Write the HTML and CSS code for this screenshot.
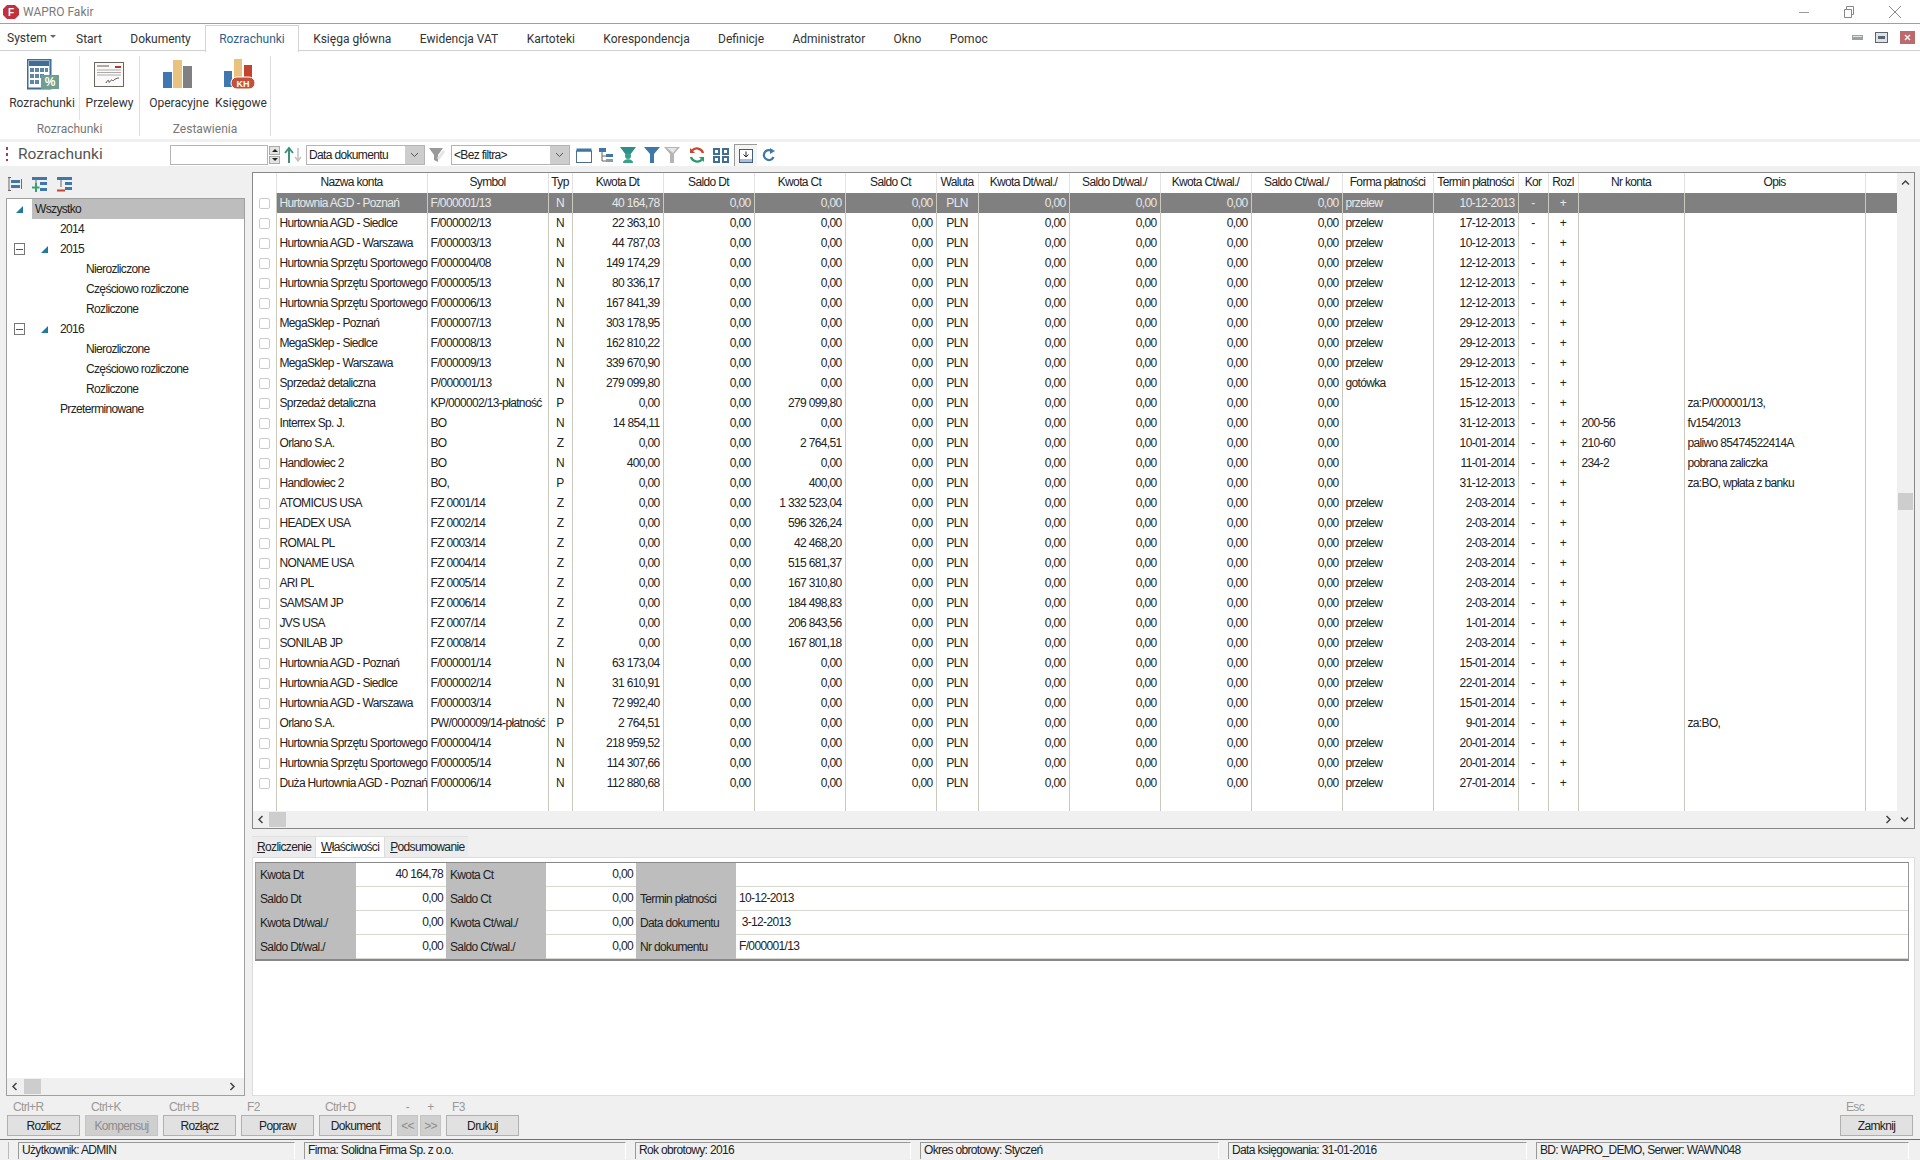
FILE: index.html
```html
<!DOCTYPE html>
<html lang="pl">
<head>
<meta charset="utf-8">
<title>WAPRO Fakir</title>
<link rel="stylesheet" href="styles.css">
</head>
<body>
<div class="app">
  <header class="titlebar">
    <svg class="logo" width="16" height="14" viewBox="0 0 16 14"><polygon points="4,0 12,0 16,4 16,10 12,14 4,14 0,10 0,4" fill="#c4303a"/><text x="8" y="11" text-anchor="middle" class="logo-f">F</text></svg>
    <span class="app-name">WAPRO Fakir</span>
    <div class="winbtns">
      <svg width="12" height="12" viewBox="0 0 12 12"><path d="M1 6.5h10" stroke="#999" fill="none"/></svg>
      <svg width="12" height="12" viewBox="0 0 12 12"><path d="M1.5 3.5h7v8h-7zM3.5 3.5v-3h7v8h-2" stroke="#888" fill="none"/></svg>
      <svg width="14" height="14" viewBox="0 0 14 14"><path d="M1 1l12 12M13 1L1 13" stroke="#888" fill="none"/></svg>
    </div>
  </header>

  <nav class="menubar">
    <span class="tab first">System<i class="caret"></i></span>
    <span class="tab t-start">Start</span>
    <span class="tab">Dokumenty</span>
    <span class="tab active">Rozrachunki</span>
    <span class="tab">Księga główna</span>
    <span class="tab">Ewidencja VAT</span>
    <span class="tab">Kartoteki</span>
    <span class="tab">Korespondencja</span>
    <span class="tab">Definicje</span>
    <span class="tab">Administrator</span>
    <span class="tab">Okno</span>
    <span class="tab">Pomoc</span>
    <div class="mdibtns">
      <svg width="11" height="5" viewBox="0 0 11 5"><rect x="0" y="0" width="11" height="5" fill="#9aa0a8"/><rect x="1" y="1" width="9" height="1" fill="#e4e4e4"/></svg>
      <svg width="13" height="11" viewBox="0 0 13 11"><rect x=".5" y=".5" width="12" height="10" fill="#dfe2e6" stroke="#5c6670"/><rect x="3" y="4" width="7" height="3" fill="#5c6670"/></svg>
      <svg width="15" height="13" viewBox="0 0 15 13"><rect width="15" height="13" fill="#bd6a6c"/><path d="M5 4l5 5M10 4l-5 5" stroke="#eee" stroke-width="1.6"/></svg>
    </div>
  </nav>

  <section class="ribbon">
    <div class="rgroup g1">
      <div class="rbtns">
        <div class="rbtn b-roz">
          <svg width="32" height="31" viewBox="0 0 32 31"><rect x=".5" y=".5" width="23" height="29" fill="#fff" stroke="#3f6d94" stroke-width="2"/><rect x="2" y="2" width="20" height="5" fill="#3f6d94"/><g fill="#5d86a8"><rect x="3" y="9" width="4" height="4"/><rect x="8" y="9" width="4" height="4"/><rect x="13" y="9" width="4" height="4"/><rect x="18" y="9" width="3" height="4"/><rect x="3" y="15" width="4" height="4"/><rect x="8" y="15" width="4" height="4"/><rect x="13" y="15" width="4" height="4"/><rect x="3" y="21" width="4" height="4"/><rect x="8" y="21" width="4" height="4"/></g><rect x="14" y="16" width="18" height="14" fill="#6f9f90"/><text x="23" y="27" text-anchor="middle" class="pct">%</text></svg>
          <span>Rozrachunki</span>
        </div>
        <div class="rbtn b-prz">
          <svg width="30" height="25" viewBox="0 0 30 25"><rect x=".5" y=".5" width="29" height="24" fill="#fbfaf8" stroke="#6b6560"/><rect x="3" y="3" width="12" height="2" fill="#b0aaa5"/><rect x="21" y="4" width="6" height="2" fill="#b13a30"/><path d="M3 8h24M3 10.5h24M3 13h24" stroke="#aaa" fill="none"/><path d="M12 21c2-4 3-3 3-1s2-3 3-2 1 1 2 0 3-2 5-2" stroke="#555" fill="none"/></svg>
          <span>Przelewy</span>
        </div>
      </div>
      <div class="rlabel">Rozrachunki</div>
    </div>
    <div class="rgroup g2">
      <div class="rbtns">
        <div class="rbtn b-ope">
          <svg width="29" height="28" viewBox="0 0 29 28"><rect x="0" y="12" width="9" height="16" fill="#3f78b0"/><rect x="10" y="0" width="9" height="28" fill="#e8c27e"/><rect x="20" y="6" width="9" height="22" fill="#808080"/></svg>
          <span>Operacyjne</span>
        </div>
        <div class="rbtn b-ksi">
          <svg width="31" height="31" viewBox="0 0 31 31"><rect x="0" y="12" width="8" height="16" fill="#3f78b0"/><rect x="10" y="0" width="8" height="28" fill="#e8c27e"/><rect x="20" y="6" width="8" height="22" fill="#c4432f"/><rect x="7" y="18" width="24" height="12" rx="6" fill="#c4503c" stroke="#fff"/><text x="19" y="28" text-anchor="middle" class="kh">KH</text></svg>
          <span>Księgowe</span>
        </div>
      </div>
      <div class="rlabel">Zestawienia</div>
    </div>
  </section>

  <section class="toolbar">
    <div class="tb-title"><i class="dots"></i><span>Rozrachunki</span></div>
    <input class="searchbox" type="text" value="" aria-label="Szukaj">
    <div class="spinner"><b class="up"></b><b class="down"></b></div>
    <svg class="sort" width="19" height="18" viewBox="0 0 19 18"><path d="M5 17V3M1 7l4-5 4 5" stroke="#3f8f7f" stroke-width="2" fill="none"/><path d="M14 2v13M11 11l3 4 3-4" stroke="#c4c4c4" stroke-width="1.6" fill="none"/></svg>
    <div class="combo c1"><span>Data dokumentu</span><i class="drop"><svg width="9" height="6" viewBox="0 0 9 6"><path d="M1 1l3.5 3.5L8 1" stroke="#555" fill="none"/></svg></i></div>
    <svg class="funnel-x" width="18" height="18" viewBox="0 0 18 18"><path d="M1 2h14l-5 7v7l-4-2V9z" fill="#9a9a9a"/><path d="M9 12l6-8 2 2-6 8z" fill="#e4e4e4"/></svg>
    <div class="combo c2"><span>&lt;Bez filtra&gt;</span><i class="drop"><svg width="9" height="6" viewBox="0 0 9 6"><path d="M1 1l3.5 3.5L8 1" stroke="#555" fill="none"/></svg></i></div>
    <div class="tb-icons">
      <svg class="i1" width="16" height="15" viewBox="0 0 16 15"><rect x=".5" y="3" width="15" height="11.5" fill="#fff" stroke="#4a6f8f"/><rect x=".5" y=".5" width="15" height="3" fill="#3f78a8"/></svg>
      <svg class="i2" width="16" height="15" viewBox="0 0 16 15"><rect x="1" y="0" width="7" height="4" fill="#3f78a8"/><path d="M4 4v9h4M4 8h4" stroke="#666" fill="none"/><rect x="8" y="6" width="7" height="3" fill="#3f78a8"/><rect x="8" y="11" width="7" height="3" fill="#8a9aa8"/></svg>
      <svg class="i3" width="16" height="16" viewBox="0 0 16 16"><path d="M0 0h16l-6 8v0H6z" fill="#2f8f88"/><circle cx="8" cy="9" r="3" fill="#38a088"/><path d="M3 16c0-5 10-5 10 0z" fill="#38a088"/></svg>
      <svg class="i4" width="16" height="16" viewBox="0 0 16 16"><path d="M0 0h16l-6 7v9H6V7z" fill="#3f78a8"/></svg>
      <svg class="i5" width="16" height="16" viewBox="0 0 16 16"><path d="M0 0h16l-6 7v9H6V7z" fill="#b5b5b5"/><path d="M3 1h10l-4 5z" fill="#e6e6e6"/></svg>
      <svg class="i6" width="16" height="16" viewBox="0 0 16 16"><path d="M14 6A6.500 6.500 0 0 0 3 3.500" stroke="#c8452f" stroke-width="2.400" fill="none"/><path d="M1 1v5h5z" fill="#c8452f"/><path d="M2 10a6.500 6.500 0 0 0 11 2.500" stroke="#2f9a70" stroke-width="2.400" fill="none"/><path d="M15 15v-5h-5z" fill="#2f9a70"/></svg>
      <svg class="i7" width="16" height="15" viewBox="0 0 16 15"><g fill="none" stroke="#3f6d94" stroke-width="2"><rect x="1" y="1" width="5" height="5"/><rect x="10" y="1" width="5" height="5"/><rect x="1" y="9" width="5" height="5"/><rect x="10" y="9" width="5" height="5"/></g></svg>
      <div class="i8"><svg width="14" height="14" viewBox="0 0 14 14"><rect x=".5" y=".5" width="13" height="13" fill="#fff" stroke="#3f5f7f"/><rect x="1" y="10" width="12" height="3" fill="#a8c0d8"/><path d="M7 2.500v5M4.500 5.500L7 8l2.500-2.500" stroke="#222" fill="none"/></svg></div>
      <svg class="i9" width="14" height="14" viewBox="0 0 14 14"><path d="M11.500 9A5 5 0 1 1 9 2.500" stroke="#3f78a8" stroke-width="2.200" fill="none"/><path d="M8 0l5 3-5 3z" fill="#3f78a8"/></svg>
    </div>
  </section>

  <main class="content">
    <aside class="left">
      <div class="treetools">
        <svg width="15" height="14" viewBox="0 0 15 14"><path d="M1 0v14M0 .5h3M0 13.500h3" stroke="#666" fill="none"/><rect x="3" y="3" width="9" height="3" fill="#3f78a8"/><rect x="3" y="8" width="9" height="3" fill="#3f78a8"/><path d="M13.500 2v10" stroke="#3f78a8"/></svg>
        <svg width="16" height="15" viewBox="0 0 16 15"><rect x="0" y="0" width="15" height="3" fill="#3f78a8"/><rect x="8" y="5" width="7" height="3" fill="#3f78a8"/><rect x="8" y="11" width="7" height="3" fill="#3f78a8"/><path d="M4 3v3" stroke="#666"/><path d="M4 6v9M0 10.500h7.500" stroke="#37a26f" stroke-width="2"/></svg>
        <svg width="16" height="15" viewBox="0 0 16 15"><rect x="0" y="0" width="15" height="3" fill="#3f78a8"/><rect x="8" y="5" width="7" height="3" fill="#3f78a8"/><rect x="8" y="10" width="7" height="3" fill="#3f78a8"/><path d="M4 3v7" stroke="#666"/><path d="M0 13.500h8" stroke="#c8452f" stroke-width="2"/></svg>
      </div>
      <div class="tree">
        <div class="tree-rows">
          <div class="node l0 sel"><svg class="tri" width="7" height="7" viewBox="0 0 7 7"><path d="M7 0v7H0z"/></svg><span>Wszystko</span></div>
          <div class="node l1"><span>2014</span></div>
          <div class="node l1"><i class="toggle"></i><svg class="tri" width="7" height="7" viewBox="0 0 7 7"><path d="M7 0v7H0z"/></svg><span>2015</span></div>
          <div class="node l2"><span>Nierozliczone</span></div>
          <div class="node l2"><span>Częściowo rozliczone</span></div>
          <div class="node l2"><span>Rozliczone</span></div>
          <div class="node l1"><i class="toggle"></i><svg class="tri" width="7" height="7" viewBox="0 0 7 7"><path d="M7 0v7H0z"/></svg><span>2016</span></div>
          <div class="node l2"><span>Nierozliczone</span></div>
          <div class="node l2"><span>Częściowo rozliczone</span></div>
          <div class="node l2"><span>Rozliczone</span></div>
          <div class="node l1"><span>Przeterminowane</span></div>
        </div>
        <div class="hscroll tree-scroll">
          <svg class="arrow" width="7" height="9" viewBox="0 0 7 9"><path d="M5.500 1L2 4.500 5.500 8" stroke="#444" stroke-width="1.500" fill="none"/></svg>
          <i class="thumb tree-thumb"></i>
          <svg class="arrow end" width="7" height="9" viewBox="0 0 7 9"><path d="M1.500 1L5 4.500 1.500 8" stroke="#444" stroke-width="1.500" fill="none"/></svg>
        </div>
      </div>
    </aside>

    <div class="right">
      <div class="grid">
        <div class="grid-main">
          <table class="data">
            <colgroup><col class="w-chk"><col class="w-name"><col class="w-sym"><col class="w-typ"><col class="w-a"><col class="w-a"><col class="w-a"><col class="w-a"><col class="w-wal"><col class="w-a"><col class="w-a"><col class="w-a"><col class="w-a"><col class="w-a"><col class="w-term"><col class="w-kor"><col class="w-kor"><col class="w-nr"><col class="w-opis"><col class="w-end"></colgroup>
            <thead><tr><th></th><th>Nazwa konta</th><th>Symbol</th><th>Typ</th><th>Kwota Dt</th><th>Saldo Dt</th><th>Kwota Ct</th><th>Saldo Ct</th><th>Waluta</th><th>Kwota Dt/wal./</th><th>Saldo Dt/wal./</th><th>Kwota Ct/wal./</th><th>Saldo Ct/wal./</th><th>Forma płatności</th><th>Termin płatności</th><th>Kor</th><th>Rozl</th><th>Nr konta</th><th>Opis</th><th></th></tr></thead>
            <tbody>
<tr class="selected"><td class="chk"><i></i></td><td>Hurtownia AGD - Poznań</td><td>F/000001/13</td><td class="ctr">N</td><td class="n">40 164,78</td><td class="n">0,00</td><td class="n">0,00</td><td class="n">0,00</td><td class="ctr">PLN</td><td class="n">0,00</td><td class="n">0,00</td><td class="n">0,00</td><td class="n">0,00</td><td>przelew</td><td class="n">10-12-2013</td><td class="ctr">-</td><td class="ctr">+</td><td></td><td></td><td></td></tr>
<tr><td class="chk"><i></i></td><td>Hurtownia AGD - Siedlce</td><td>F/000002/13</td><td class="ctr">N</td><td class="n">22 363,10</td><td class="n">0,00</td><td class="n">0,00</td><td class="n">0,00</td><td class="ctr">PLN</td><td class="n">0,00</td><td class="n">0,00</td><td class="n">0,00</td><td class="n">0,00</td><td>przelew</td><td class="n">17-12-2013</td><td class="ctr">-</td><td class="ctr">+</td><td></td><td></td><td></td></tr>
<tr><td class="chk"><i></i></td><td>Hurtownia AGD - Warszawa</td><td>F/000003/13</td><td class="ctr">N</td><td class="n">44 787,03</td><td class="n">0,00</td><td class="n">0,00</td><td class="n">0,00</td><td class="ctr">PLN</td><td class="n">0,00</td><td class="n">0,00</td><td class="n">0,00</td><td class="n">0,00</td><td>przelew</td><td class="n">10-12-2013</td><td class="ctr">-</td><td class="ctr">+</td><td></td><td></td><td></td></tr>
<tr><td class="chk"><i></i></td><td>Hurtownia Sprzętu Sportowego</td><td>F/000004/08</td><td class="ctr">N</td><td class="n">149 174,29</td><td class="n">0,00</td><td class="n">0,00</td><td class="n">0,00</td><td class="ctr">PLN</td><td class="n">0,00</td><td class="n">0,00</td><td class="n">0,00</td><td class="n">0,00</td><td>przelew</td><td class="n">12-12-2013</td><td class="ctr">-</td><td class="ctr">+</td><td></td><td></td><td></td></tr>
<tr><td class="chk"><i></i></td><td>Hurtownia Sprzętu Sportowego</td><td>F/000005/13</td><td class="ctr">N</td><td class="n">80 336,17</td><td class="n">0,00</td><td class="n">0,00</td><td class="n">0,00</td><td class="ctr">PLN</td><td class="n">0,00</td><td class="n">0,00</td><td class="n">0,00</td><td class="n">0,00</td><td>przelew</td><td class="n">12-12-2013</td><td class="ctr">-</td><td class="ctr">+</td><td></td><td></td><td></td></tr>
<tr><td class="chk"><i></i></td><td>Hurtownia Sprzętu Sportowego</td><td>F/000006/13</td><td class="ctr">N</td><td class="n">167 841,39</td><td class="n">0,00</td><td class="n">0,00</td><td class="n">0,00</td><td class="ctr">PLN</td><td class="n">0,00</td><td class="n">0,00</td><td class="n">0,00</td><td class="n">0,00</td><td>przelew</td><td class="n">12-12-2013</td><td class="ctr">-</td><td class="ctr">+</td><td></td><td></td><td></td></tr>
<tr><td class="chk"><i></i></td><td>MegaSklep - Poznań</td><td>F/000007/13</td><td class="ctr">N</td><td class="n">303 178,95</td><td class="n">0,00</td><td class="n">0,00</td><td class="n">0,00</td><td class="ctr">PLN</td><td class="n">0,00</td><td class="n">0,00</td><td class="n">0,00</td><td class="n">0,00</td><td>przelew</td><td class="n">29-12-2013</td><td class="ctr">-</td><td class="ctr">+</td><td></td><td></td><td></td></tr>
<tr><td class="chk"><i></i></td><td>MegaSklep - Siedlce</td><td>F/000008/13</td><td class="ctr">N</td><td class="n">162 810,22</td><td class="n">0,00</td><td class="n">0,00</td><td class="n">0,00</td><td class="ctr">PLN</td><td class="n">0,00</td><td class="n">0,00</td><td class="n">0,00</td><td class="n">0,00</td><td>przelew</td><td class="n">29-12-2013</td><td class="ctr">-</td><td class="ctr">+</td><td></td><td></td><td></td></tr>
<tr><td class="chk"><i></i></td><td>MegaSklep - Warszawa</td><td>F/000009/13</td><td class="ctr">N</td><td class="n">339 670,90</td><td class="n">0,00</td><td class="n">0,00</td><td class="n">0,00</td><td class="ctr">PLN</td><td class="n">0,00</td><td class="n">0,00</td><td class="n">0,00</td><td class="n">0,00</td><td>przelew</td><td class="n">29-12-2013</td><td class="ctr">-</td><td class="ctr">+</td><td></td><td></td><td></td></tr>
<tr><td class="chk"><i></i></td><td>Sprzedaż detaliczna</td><td>P/000001/13</td><td class="ctr">N</td><td class="n">279 099,80</td><td class="n">0,00</td><td class="n">0,00</td><td class="n">0,00</td><td class="ctr">PLN</td><td class="n">0,00</td><td class="n">0,00</td><td class="n">0,00</td><td class="n">0,00</td><td>gotówka</td><td class="n">15-12-2013</td><td class="ctr">-</td><td class="ctr">+</td><td></td><td></td><td></td></tr>
<tr><td class="chk"><i></i></td><td>Sprzedaż detaliczna</td><td>KP/000002/13-płatność</td><td class="ctr">P</td><td class="n">0,00</td><td class="n">0,00</td><td class="n">279 099,80</td><td class="n">0,00</td><td class="ctr">PLN</td><td class="n">0,00</td><td class="n">0,00</td><td class="n">0,00</td><td class="n">0,00</td><td></td><td class="n">15-12-2013</td><td class="ctr">-</td><td class="ctr">+</td><td></td><td>za:P/000001/13,</td><td></td></tr>
<tr><td class="chk"><i></i></td><td>Interrex Sp. J.</td><td>BO</td><td class="ctr">N</td><td class="n">14 854,11</td><td class="n">0,00</td><td class="n">0,00</td><td class="n">0,00</td><td class="ctr">PLN</td><td class="n">0,00</td><td class="n">0,00</td><td class="n">0,00</td><td class="n">0,00</td><td></td><td class="n">31-12-2013</td><td class="ctr">-</td><td class="ctr">+</td><td>200-56</td><td>fv154/2013</td><td></td></tr>
<tr><td class="chk"><i></i></td><td>Orlano S.A.</td><td>BO</td><td class="ctr">Z</td><td class="n">0,00</td><td class="n">0,00</td><td class="n">2 764,51</td><td class="n">0,00</td><td class="ctr">PLN</td><td class="n">0,00</td><td class="n">0,00</td><td class="n">0,00</td><td class="n">0,00</td><td></td><td class="n">10-01-2014</td><td class="ctr">-</td><td class="ctr">+</td><td>210-60</td><td>paliwo 85474522414A</td><td></td></tr>
<tr><td class="chk"><i></i></td><td>Handlowiec 2</td><td>BO</td><td class="ctr">N</td><td class="n">400,00</td><td class="n">0,00</td><td class="n">0,00</td><td class="n">0,00</td><td class="ctr">PLN</td><td class="n">0,00</td><td class="n">0,00</td><td class="n">0,00</td><td class="n">0,00</td><td></td><td class="n">11-01-2014</td><td class="ctr">-</td><td class="ctr">+</td><td>234-2</td><td>pobrana zaliczka</td><td></td></tr>
<tr><td class="chk"><i></i></td><td>Handlowiec 2</td><td>BO,</td><td class="ctr">P</td><td class="n">0,00</td><td class="n">0,00</td><td class="n">400,00</td><td class="n">0,00</td><td class="ctr">PLN</td><td class="n">0,00</td><td class="n">0,00</td><td class="n">0,00</td><td class="n">0,00</td><td></td><td class="n">31-12-2013</td><td class="ctr">-</td><td class="ctr">+</td><td></td><td>za:BO, wpłata z banku</td><td></td></tr>
<tr><td class="chk"><i></i></td><td>ATOMICUS USA</td><td>FZ 0001/14</td><td class="ctr">Z</td><td class="n">0,00</td><td class="n">0,00</td><td class="n">1 332 523,04</td><td class="n">0,00</td><td class="ctr">PLN</td><td class="n">0,00</td><td class="n">0,00</td><td class="n">0,00</td><td class="n">0,00</td><td>przelew</td><td class="n">2-03-2014</td><td class="ctr">-</td><td class="ctr">+</td><td></td><td></td><td></td></tr>
<tr><td class="chk"><i></i></td><td>HEADEX USA</td><td>FZ 0002/14</td><td class="ctr">Z</td><td class="n">0,00</td><td class="n">0,00</td><td class="n">596 326,24</td><td class="n">0,00</td><td class="ctr">PLN</td><td class="n">0,00</td><td class="n">0,00</td><td class="n">0,00</td><td class="n">0,00</td><td>przelew</td><td class="n">2-03-2014</td><td class="ctr">-</td><td class="ctr">+</td><td></td><td></td><td></td></tr>
<tr><td class="chk"><i></i></td><td>ROMAL PL</td><td>FZ 0003/14</td><td class="ctr">Z</td><td class="n">0,00</td><td class="n">0,00</td><td class="n">42 468,20</td><td class="n">0,00</td><td class="ctr">PLN</td><td class="n">0,00</td><td class="n">0,00</td><td class="n">0,00</td><td class="n">0,00</td><td>przelew</td><td class="n">2-03-2014</td><td class="ctr">-</td><td class="ctr">+</td><td></td><td></td><td></td></tr>
<tr><td class="chk"><i></i></td><td>NONAME USA</td><td>FZ 0004/14</td><td class="ctr">Z</td><td class="n">0,00</td><td class="n">0,00</td><td class="n">515 681,37</td><td class="n">0,00</td><td class="ctr">PLN</td><td class="n">0,00</td><td class="n">0,00</td><td class="n">0,00</td><td class="n">0,00</td><td>przelew</td><td class="n">2-03-2014</td><td class="ctr">-</td><td class="ctr">+</td><td></td><td></td><td></td></tr>
<tr><td class="chk"><i></i></td><td>ARI PL</td><td>FZ 0005/14</td><td class="ctr">Z</td><td class="n">0,00</td><td class="n">0,00</td><td class="n">167 310,80</td><td class="n">0,00</td><td class="ctr">PLN</td><td class="n">0,00</td><td class="n">0,00</td><td class="n">0,00</td><td class="n">0,00</td><td>przelew</td><td class="n">2-03-2014</td><td class="ctr">-</td><td class="ctr">+</td><td></td><td></td><td></td></tr>
<tr><td class="chk"><i></i></td><td>SAMSAM JP</td><td>FZ 0006/14</td><td class="ctr">Z</td><td class="n">0,00</td><td class="n">0,00</td><td class="n">184 498,83</td><td class="n">0,00</td><td class="ctr">PLN</td><td class="n">0,00</td><td class="n">0,00</td><td class="n">0,00</td><td class="n">0,00</td><td>przelew</td><td class="n">2-03-2014</td><td class="ctr">-</td><td class="ctr">+</td><td></td><td></td><td></td></tr>
<tr><td class="chk"><i></i></td><td>JVS USA</td><td>FZ 0007/14</td><td class="ctr">Z</td><td class="n">0,00</td><td class="n">0,00</td><td class="n">206 843,56</td><td class="n">0,00</td><td class="ctr">PLN</td><td class="n">0,00</td><td class="n">0,00</td><td class="n">0,00</td><td class="n">0,00</td><td>przelew</td><td class="n">1-01-2014</td><td class="ctr">-</td><td class="ctr">+</td><td></td><td></td><td></td></tr>
<tr><td class="chk"><i></i></td><td>SONILAB JP</td><td>FZ 0008/14</td><td class="ctr">Z</td><td class="n">0,00</td><td class="n">0,00</td><td class="n">167 801,18</td><td class="n">0,00</td><td class="ctr">PLN</td><td class="n">0,00</td><td class="n">0,00</td><td class="n">0,00</td><td class="n">0,00</td><td>przelew</td><td class="n">2-03-2014</td><td class="ctr">-</td><td class="ctr">+</td><td></td><td></td><td></td></tr>
<tr><td class="chk"><i></i></td><td>Hurtownia AGD - Poznań</td><td>F/000001/14</td><td class="ctr">N</td><td class="n">63 173,04</td><td class="n">0,00</td><td class="n">0,00</td><td class="n">0,00</td><td class="ctr">PLN</td><td class="n">0,00</td><td class="n">0,00</td><td class="n">0,00</td><td class="n">0,00</td><td>przelew</td><td class="n">15-01-2014</td><td class="ctr">-</td><td class="ctr">+</td><td></td><td></td><td></td></tr>
<tr><td class="chk"><i></i></td><td>Hurtownia AGD - Siedlce</td><td>F/000002/14</td><td class="ctr">N</td><td class="n">31 610,91</td><td class="n">0,00</td><td class="n">0,00</td><td class="n">0,00</td><td class="ctr">PLN</td><td class="n">0,00</td><td class="n">0,00</td><td class="n">0,00</td><td class="n">0,00</td><td>przelew</td><td class="n">22-01-2014</td><td class="ctr">-</td><td class="ctr">+</td><td></td><td></td><td></td></tr>
<tr><td class="chk"><i></i></td><td>Hurtownia AGD - Warszawa</td><td>F/000003/14</td><td class="ctr">N</td><td class="n">72 992,40</td><td class="n">0,00</td><td class="n">0,00</td><td class="n">0,00</td><td class="ctr">PLN</td><td class="n">0,00</td><td class="n">0,00</td><td class="n">0,00</td><td class="n">0,00</td><td>przelew</td><td class="n">15-01-2014</td><td class="ctr">-</td><td class="ctr">+</td><td></td><td></td><td></td></tr>
<tr><td class="chk"><i></i></td><td>Orlano S.A.</td><td>PW/000009/14-płatność</td><td class="ctr">P</td><td class="n">2 764,51</td><td class="n">0,00</td><td class="n">0,00</td><td class="n">0,00</td><td class="ctr">PLN</td><td class="n">0,00</td><td class="n">0,00</td><td class="n">0,00</td><td class="n">0,00</td><td></td><td class="n">9-01-2014</td><td class="ctr">-</td><td class="ctr">+</td><td></td><td>za:BO,</td><td></td></tr>
<tr><td class="chk"><i></i></td><td>Hurtownia Sprzętu Sportowego</td><td>F/000004/14</td><td class="ctr">N</td><td class="n">218 959,52</td><td class="n">0,00</td><td class="n">0,00</td><td class="n">0,00</td><td class="ctr">PLN</td><td class="n">0,00</td><td class="n">0,00</td><td class="n">0,00</td><td class="n">0,00</td><td>przelew</td><td class="n">20-01-2014</td><td class="ctr">-</td><td class="ctr">+</td><td></td><td></td><td></td></tr>
<tr><td class="chk"><i></i></td><td>Hurtownia Sprzętu Sportowego</td><td>F/000005/14</td><td class="ctr">N</td><td class="n">114 307,66</td><td class="n">0,00</td><td class="n">0,00</td><td class="n">0,00</td><td class="ctr">PLN</td><td class="n">0,00</td><td class="n">0,00</td><td class="n">0,00</td><td class="n">0,00</td><td>przelew</td><td class="n">20-01-2014</td><td class="ctr">-</td><td class="ctr">+</td><td></td><td></td><td></td></tr>
<tr><td class="chk"><i></i></td><td>Duża Hurtownia AGD - Poznań</td><td>F/000006/14</td><td class="ctr">N</td><td class="n">112 880,68</td><td class="n">0,00</td><td class="n">0,00</td><td class="n">0,00</td><td class="ctr">PLN</td><td class="n">0,00</td><td class="n">0,00</td><td class="n">0,00</td><td class="n">0,00</td><td>przelew</td><td class="n">27-01-2014</td><td class="ctr">-</td><td class="ctr">+</td><td></td><td></td><td></td></tr>
<tr class="filler"><td class="chk"></td><td></td><td></td><td></td><td></td><td></td><td></td><td></td><td></td><td></td><td></td><td></td><td></td><td></td><td></td><td></td><td></td><td></td><td></td><td></td></tr>
            </tbody>
          </table>
          <div class="vscroll">
            <svg width="9" height="7" viewBox="0 0 9 7"><path d="M1 5.500L4.500 2 8 5.500" stroke="#444" stroke-width="1.500" fill="none"/></svg>
            <i class="vthumb"></i>
          </div>
        </div>
        <div class="hscroll grid-scroll">
          <svg class="arrow" width="7" height="9" viewBox="0 0 7 9"><path d="M5.500 1L2 4.500 5.500 8" stroke="#444" stroke-width="1.500" fill="none"/></svg>
          <i class="thumb grid-thumb"></i>
          <svg class="arrow end" width="7" height="9" viewBox="0 0 7 9"><path d="M1.500 1L5 4.500 1.500 8" stroke="#444" stroke-width="1.500" fill="none"/></svg>
          <svg class="arrow corner" width="9" height="7" viewBox="0 0 9 7"><path d="M1 1.500L4.500 5 8 1.500" stroke="#444" stroke-width="1.500" fill="none"/></svg>
        </div>
      </div>

      <div class="subtabs">
        <span class="subtab"><u>R</u>ozliczenie</span>
        <span class="subtab on"><u>W</u>łaściwości</span>
        <span class="subtab"><u>P</u>odsumowanie</span>
      </div>
      <div class="props-panel">
        <div class="props">
          <span class="lbl">Kwota Dt</span><span class="val num">40 164,78</span><span class="lbl">Kwota Ct</span><span class="val num">0,00</span><span class="lbl"></span><span class="val"></span>
          <span class="lbl">Saldo Dt</span><span class="val num">0,00</span><span class="lbl">Saldo Ct</span><span class="val num">0,00</span><span class="lbl">Termin płatności</span><span class="val">10-12-2013</span>
          <span class="lbl">Kwota Dt/wal./</span><span class="val num">0,00</span><span class="lbl">Kwota Ct/wal./</span><span class="val num">0,00</span><span class="lbl">Data dokumentu</span><span class="val">&nbsp;3-12-2013</span>
          <span class="lbl">Saldo Dt/wal./</span><span class="val num">0,00</span><span class="lbl">Saldo Ct/wal./</span><span class="val num">0,00</span><span class="lbl">Nr dokumentu</span><span class="val">F/000001/13</span>
        </div>
      </div>
    </div>
  </main>

  <section class="actions">
    <div class="act"><small>Ctrl+R</small><button type="button">Rozlicz</button></div>
    <div class="act"><small>Ctrl+K</small><button type="button" class="off">Kompensuj</button></div>
    <div class="act"><small>Ctrl+B</small><button type="button">Rozłącz</button></div>
    <div class="act"><small>F2</small><button type="button">Popraw</button></div>
    <div class="act"><small>Ctrl+D</small><button type="button">Dokument</button></div>
    <div class="act mini"><small>-</small><button type="button" class="off">&lt;&lt;</button></div>
    <div class="act mini pair"><small>+</small><button type="button" class="off">&gt;&gt;</button></div>
    <div class="act"><small>F3</small><button type="button">Drukuj</button></div>
    <div class="act close"><small>Esc</small><button type="button">Zamknij</button></div>
  </section>

  <footer class="status">
    <i class="notch"></i>
    <span class="st s1">Użytkownik: ADMIN</span>
    <span class="st s2">Firma: Solidna Firma Sp. z o.o.</span>
    <span class="st s3">Rok obrotowy: 2016</span>
    <span class="st s4">Okres obrotowy: Styczeń</span>
    <span class="st s5">Data księgowania: 31-01-2016</span>
    <span class="st s6">BD: WAPRO_DEMO, Serwer: WAWN048</span>
  </footer>
</div>
</body>
</html>
```

FILE: styles.css
```css
* { box-sizing: border-box; }
html, body { margin: 0; height: 100%; }
body {
  font-family: "Liberation Sans", Arial, sans-serif;
  font-size: 12px;
  letter-spacing: -0.65px;
  color: #222;
  background: #f0f0f0;
}
.app { width: 1920px; height: 1160px; display: flex; flex-direction: column; overflow: hidden; }

/* title bar */
.titlebar { height: 24px; background: #fff; border-bottom: 1px solid #a0a0a0; display: flex; align-items: center; padding-left: 3px; flex: none; }
.logo { margin-right: 4px; }
.logo-f { font: bold 10px "Liberation Sans", sans-serif; fill: #fff; letter-spacing: 0; }
.app-name { font: 12px Roboto, sans-serif; color: #7a7a7a; letter-spacing: 0; }
.winbtns { margin-left: auto; display: flex; align-items: center; gap: 33px; padding-right: 18px; }

/* menu */
.menubar { height: 27px; background: #fff; border-bottom: 1px solid #cfcfcf; display: flex; align-items: stretch; font: 12px Roboto, sans-serif; letter-spacing: 0; color: #333; flex: none; padding-left: 6px; position: relative; }
.tab { display: flex; align-items: center; padding: 0 13.2px; height: 26px; margin-top: 1px; border: 1px solid transparent; border-bottom: 0; white-space: nowrap; }
.tab.first { padding: 0; width: 55px; align-items: flex-start; padding-top: 5px; }
.tab.t-start { padding-left: 14px; }
.tab.active { background: #fff; border-color: #d4d4d4; color: #2f5f8a; height: 27px; margin-bottom: -1px; z-index: 1; }
.caret { display: inline-block; margin: 4px 0 0 3px; border: 3px solid transparent; border-top: 3px solid #666; border-bottom: 0; }
.mdibtns { margin-left: auto; display: flex; align-items: center; gap: 12px; padding-right: 5px; }

/* ribbon */
.ribbon { height: 88px; background: #fff; display: flex; flex: none; padding-top: 5px; }
.rgroup { display: flex; flex-direction: column; border-right: 1px solid #ddd; margin-bottom: 3px; }
.g1 { width: 140px; }
.g2 { width: 131px; }
.rbtns { display: flex; height: 64px; flex: none; }
.rbtn { display: flex; flex-direction: column; align-items: center; font: 12px Roboto, sans-serif; letter-spacing: 0; color: #333; }
.rbtn svg { height: 31px; margin-top: 3px; margin-bottom: 5px; flex: none; }
.rbtn span { line-height: 16px; white-space: nowrap; }
.b-roz { width: 80px; padding-left: 5px; border-right: 1px solid #e2e2e2; }
.b-roz svg { margin-left: 2px; }
.b-prz { width: 59px; }
.b-prz svg { margin-top: 6px; height: 25px; margin-bottom: 8px; margin-right: 2px; }
.b-ope { width: 72px; padding-left: 6px; }
.b-ope svg { margin-top: 4px; height: 28px; margin-bottom: 7px; margin-right: 4px; }
.b-ksi { width: 58px; }
.b-ksi svg { margin-right: 4px; }
.rlabel { text-align: center; font: 12px Roboto, sans-serif; letter-spacing: 0; color: #777; line-height: 14px; padding-top: 2px; }
.pct { font: bold 12px "Liberation Sans", sans-serif; fill: #fff; letter-spacing: 0; }
.kh { font: bold 9px "Liberation Sans", sans-serif; fill: #fff; letter-spacing: 0; }

/* toolbar */
.toolbar { height: 24px; margin-top: 3px; padding-top: 2px; background: #fff; display: flex; align-items: center; flex: none; }
.tb-title { width: 170px; display: flex; align-items: center; font: 15.5px Roboto, sans-serif; letter-spacing: 0; color: #555; padding-left: 6px; margin-top: -2px; }
.dots { width: 2px; height: 14px; margin-right: 10px; background: repeating-linear-gradient(#b33a4a 0 3px, transparent 3px 6px); }
.searchbox { width: 98px; height: 20px; border: 1px solid #b4b4b4; background: #fff; margin: 0; padding: 0; }
.spinner { width: 11px; height: 18px; margin-left: 1px; display: flex; flex-direction: column; gap: 1px; }
.spinner b { flex: 1; background: #e4e4e4; border: 1px solid #aaa; position: relative; display: flex; align-items: center; justify-content: center; }
.spinner b::after { content: ""; border: 3px solid transparent; }
.spinner .up::after { border-bottom: 3px solid #222; border-top: 0; }
.spinner .down::after { border-top: 3px solid #222; border-bottom: 0; }
.sort { margin-left: 4px; margin-right: 3px; flex: none; }
.combo { height: 20px; border: 1px solid #b4b4b4; background: #fff; display: flex; align-items: center; padding-left: 2px; justify-content: space-between; }
.c1 { width: 119px; }
.c2 { width: 119px; }
.funnel-x { margin: 0 5px 0 3px; flex: none; }
.drop { width: 19px; height: 18px; background: #cdcdcd; display: flex; align-items: center; justify-content: center; }
.tb-icons { display: flex; align-items: center; margin-left: 7px; }
.tb-icons svg { flex: none; }
.i1 { margin-left: -1px; }
.i2 { margin-left: 6px; }
.i3 { margin-left: 6px; }
.i4 { margin-left: 8px; }
.i5 { margin-left: 4px; }
.i6 { margin-left: 9px; }
.i7 { margin-left: 8px; }
.i8 { margin-left: 5px; width: 23px; height: 22px; border-left: 1px solid #999; border-top: 1px solid #999; background: #f4f4f4; display: flex; align-items: center; justify-content: center; }
.i9 { margin-left: 5px; }

/* content */
.content { flex: 1; min-height: 0; display: flex; padding: 6px 5px 0 6px; gap: 7px; }
.left { width: 239px; display: flex; flex-direction: column; flex: none; }
.treetools { height: 26px; display: flex; align-items: flex-start; padding: 5px 0 0 2px; gap: 9px; flex: none; }
.tree { flex: 1; min-height: 0; background: #fff; border: 1px solid #a0a0a0; display: flex; flex-direction: column; }
.tree-rows { flex: 1; }
.node { height: 20px; display: flex; align-items: center; position: relative; white-space: nowrap; padding-bottom: 1px; }
.l0 { padding-left: 28px; padding-bottom: 0; }
.l1 { padding-left: 53px; }
.l2 { padding-left: 79px; }
.sel span { background: #bdbdbd; display: flex; align-items: center; height: 20px; flex: 1; margin-left: -3px; padding: 0 0 1px 3px; }
.tri { fill: #1f7a9c; position: absolute; top: 7px; left: 34px; }
.l0 .tri { left: 9px; }
.toggle { position: absolute; left: 7px; top: 4px; width: 11px; height: 12px; border: 1px solid #777; background: linear-gradient(#555, #555) center / 7px 1px no-repeat; }

.hscroll { background: #f0f0f0; display: flex; align-items: center; flex: none; position: relative; height: 17px; }
.hscroll .arrow { margin-left: 4px; flex: none; }
.thumb { background: #cdcdcd; height: 15px; display: block; }
.tree-thumb { width: 17px; margin-left: 6px; }
.hscroll .arrow.end { margin-left: auto; margin-right: 8px; }
.grid-thumb { width: 17px; margin-left: 5px; }
.grid-scroll .arrow.end { margin-right: 8px; }
.grid-scroll .arrow.corner { margin: 0 5px 0 0; }

/* grid */
.right { flex: 1; min-width: 0; display: flex; flex-direction: column; }
.grid { height: 657px; background: #fff; border: 1px solid #888; display: flex; flex-direction: column; flex: none; overflow: hidden; }
.grid-main { flex: 1; min-height: 0; display: flex; }
table.data { table-layout: fixed; width: 1644px; border-collapse: collapse; flex: none; }
.w-chk { width: 23px; }
.w-name { width: 151px; }
.w-sym { width: 121px; }
.w-typ { width: 24px; }
.w-a { width: 91px; }
.w-wal { width: 42px; }
.w-term { width: 85px; }
.w-kor { width: 30px; }
.w-nr { width: 106px; }
.w-opis { width: 181px; }
.w-end { width: 32px; }
th { height: 20px; font-weight: normal; text-align: center; padding: 0 0 3px; border-right: 1px solid #e2e2e2; white-space: nowrap; }
td { height: 20px; padding: 0 0 1px 3px; border-right: 1px solid #c9c9bd; white-space: nowrap; }
td.n { text-align: right; padding: 0 3px 1px 0; }
td.ctr { text-align: center; padding: 0 0 1px; }
td.chk { padding: 0; text-align: center; }
td.chk i { display: inline-block; width: 11px; height: 11px; border: 1px solid #ccc; border-radius: 2px; vertical-align: middle; }
.selected td { background: #808080; color: #e8e8e8; }
.selected td.chk { background: #fff; }
td:last-child, th:last-child { border-right: 0; }
.vscroll { flex: 1; background: #f0f0f0; position: relative; display: flex; justify-content: center; padding-top: 6px; }
.vscroll svg { flex: none; }
.vthumb { position: absolute; left: 1px; top: 320px; width: 15px; height: 17px; background: #cdcdcd; }

/* subtabs */
.subtabs { height: 21px; margin-top: 7px; display: flex; flex: none; width: 216px; background: #ececec; border-top: 1px solid #e0e0e0; }
.subtab { padding: 3px 5px 0 5px; white-space: nowrap; }
.subtab:first-child { width: 63px; }
.subtab.on { background: #fff; width: 73px; border-left: 1px solid #ddd; border-right: 1px solid #ddd; }
.props-panel { flex: 1; min-height: 0; background: #fff; border: 1px solid #ddd; padding: 4px 5px 4px 2px; }
.props { display: grid; grid-template-columns: 100px 90px 100px 90px 100px 1fr; grid-auto-rows: 24px; border: 1px solid #999; border-top-color: #888; border-bottom: 2px solid #888; }
.lbl { background: #bdbdbd; display: flex; align-items: center; padding: 0 0 1px 4px; white-space: nowrap; }
.val { background: #fff; display: flex; align-items: center; padding: 0 3px 1px; border-bottom: 1px solid #d8d8d0; }
.val.num { justify-content: flex-end; }

/* actions */
.actions { height: 43px; display: flex; gap: 5px; padding: 5px 7px 0 7px; flex: none; }
.act { width: 73px; display: flex; flex-direction: column; }
.act small { font-size: 12px; line-height: 13px; color: #999; padding-left: 6px; height: 14px; flex: none; }
.act button { height: 21px; margin: 0; padding: 0; background: #e1e1e1; border: 1px solid #b0b0b0; font: inherit; letter-spacing: inherit; color: #222; }
.act button.off { background: #cfcfcf; color: #8c8c8c; border-color: #c4c4c4; }
.mini { width: 21px; }
.mini small { text-align: center; padding: 0; }
.mini.pair { margin-left: -3px; }
.act.close { margin-left: auto; }

/* status */
.status { height: 21px; border-top: 1px solid #707070; display: flex; align-items: flex-end; flex: none; padding: 0 0 1px 8px; position: relative; }
.notch { width: 1px; height: 17px; background: #bbb; margin-right: 9px; flex: none; }
.st { height: 17px; border-left: 1px solid #999; border-top: 1px solid #999; border-right: 1px solid #fff; padding-left: 3px; line-height: 14px; white-space: nowrap; flex: none; margin-right: 9px; }
.s1 { width: 277px; }
.s2 { width: 322px; }
.s3 { width: 276px; }
.s4 { width: 299px; }
.s5 { width: 299px; }
.s6 { width: 373px; margin-right: 0; }
```
